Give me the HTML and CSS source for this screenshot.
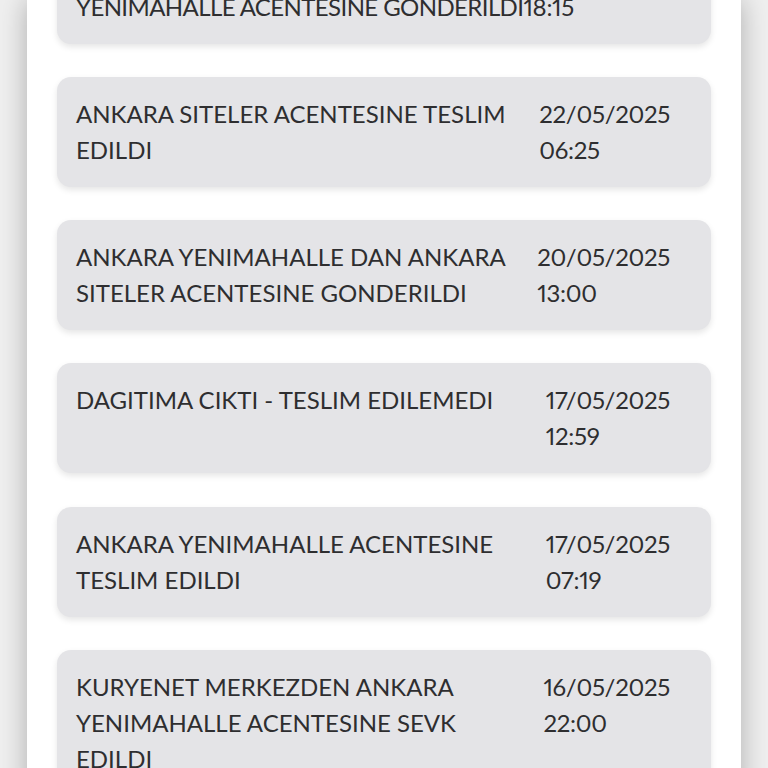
FILE: index.html
```html
<!DOCTYPE html>
<html lang="tr">
<head>
<meta charset="utf-8">
<title>Kargo Takip</title>
<link rel="stylesheet" href="styles.css">
</head>
<body>
<main class="panel">
  <ul class="timeline">
    <li class="card card--first">
      <div class="desc desc--nowrap">KURYENET MERKEZDEN ANKARA<br>YENIMAHALLE ACENTESINE GONDERILDI</div>
      <div class="when when--tight"><span>16/05/2025</span><span>18:15</span></div>
    </li>
    <li class="card">
      <div class="desc">ANKARA SITELER ACENTESINE TESLIM EDILDI</div>
      <div class="when"><span>22/05/2025</span><span>06:25</span></div>
    </li>
    <li class="card">
      <div class="desc">ANKARA YENIMAHALLE DAN ANKARA SITELER ACENTESINE GONDERILDI</div>
      <div class="when"><span>20/05/2025</span><span>13:00</span></div>
    </li>
    <li class="card">
      <div class="desc">DAGITIMA CIKTI - TESLIM EDILEMEDI</div>
      <div class="when"><span>17/05/2025</span><span>12:59</span></div>
    </li>
    <li class="card">
      <div class="desc">ANKARA YENIMAHALLE ACENTESINE TESLIM EDILDI</div>
      <div class="when"><span>17/05/2025</span><span>07:19</span></div>
    </li>
    <li class="card">
      <div class="desc">KURYENET MERKEZDEN ANKARA YENIMAHALLE ACENTESINE SEVK EDILDI</div>
      <div class="when"><span>16/05/2025</span><span>22:00</span></div>
    </li>
  </ul>
</main>
</body>
</html>
```
FILE: styles.css
```css
html, body {
  margin: 0;
  padding: 0;
  height: 100%;
  overflow: hidden;
}
body {
  background: #efefef;
  font-family: "Lato", "Noto Sans", sans-serif;
  color: #2e2e30;
}
.panel {
  margin: 0 27px;
  min-height: 100%;
  background: #ffffff;
  box-shadow: 0 0 26px rgba(0, 0, 0, 0.28);
  overflow: hidden;
}
.timeline {
  list-style: none;
  margin: -66.5px 0 0 0;
  padding: 0 30px;
  display: flex;
  flex-direction: column;
  gap: 33.3px;
}
.card {
  display: flex;
  align-items: flex-start;
  min-height: 72px;
  padding: 19px 41px 19px 19px;
  background: #e4e4e7;
  border-radius: 14px;
  box-shadow: 0 3px 6px rgba(0, 0, 0, 0.10);
  font-size: 24px;
  line-height: 36px;
  font-weight: 400;
}
.desc {
  flex: 0 1 452px;
}
.desc--nowrap {
  flex: none;
  white-space: nowrap;
  letter-spacing: -0.6px;
}
.when {
  margin-left: auto;
  display: flex;
  flex-direction: column;
  white-space: nowrap;
  font-variant-numeric: proportional-nums;
  letter-spacing: -0.3px;
}
.when--tight {
  margin-left: 0;
}
```
